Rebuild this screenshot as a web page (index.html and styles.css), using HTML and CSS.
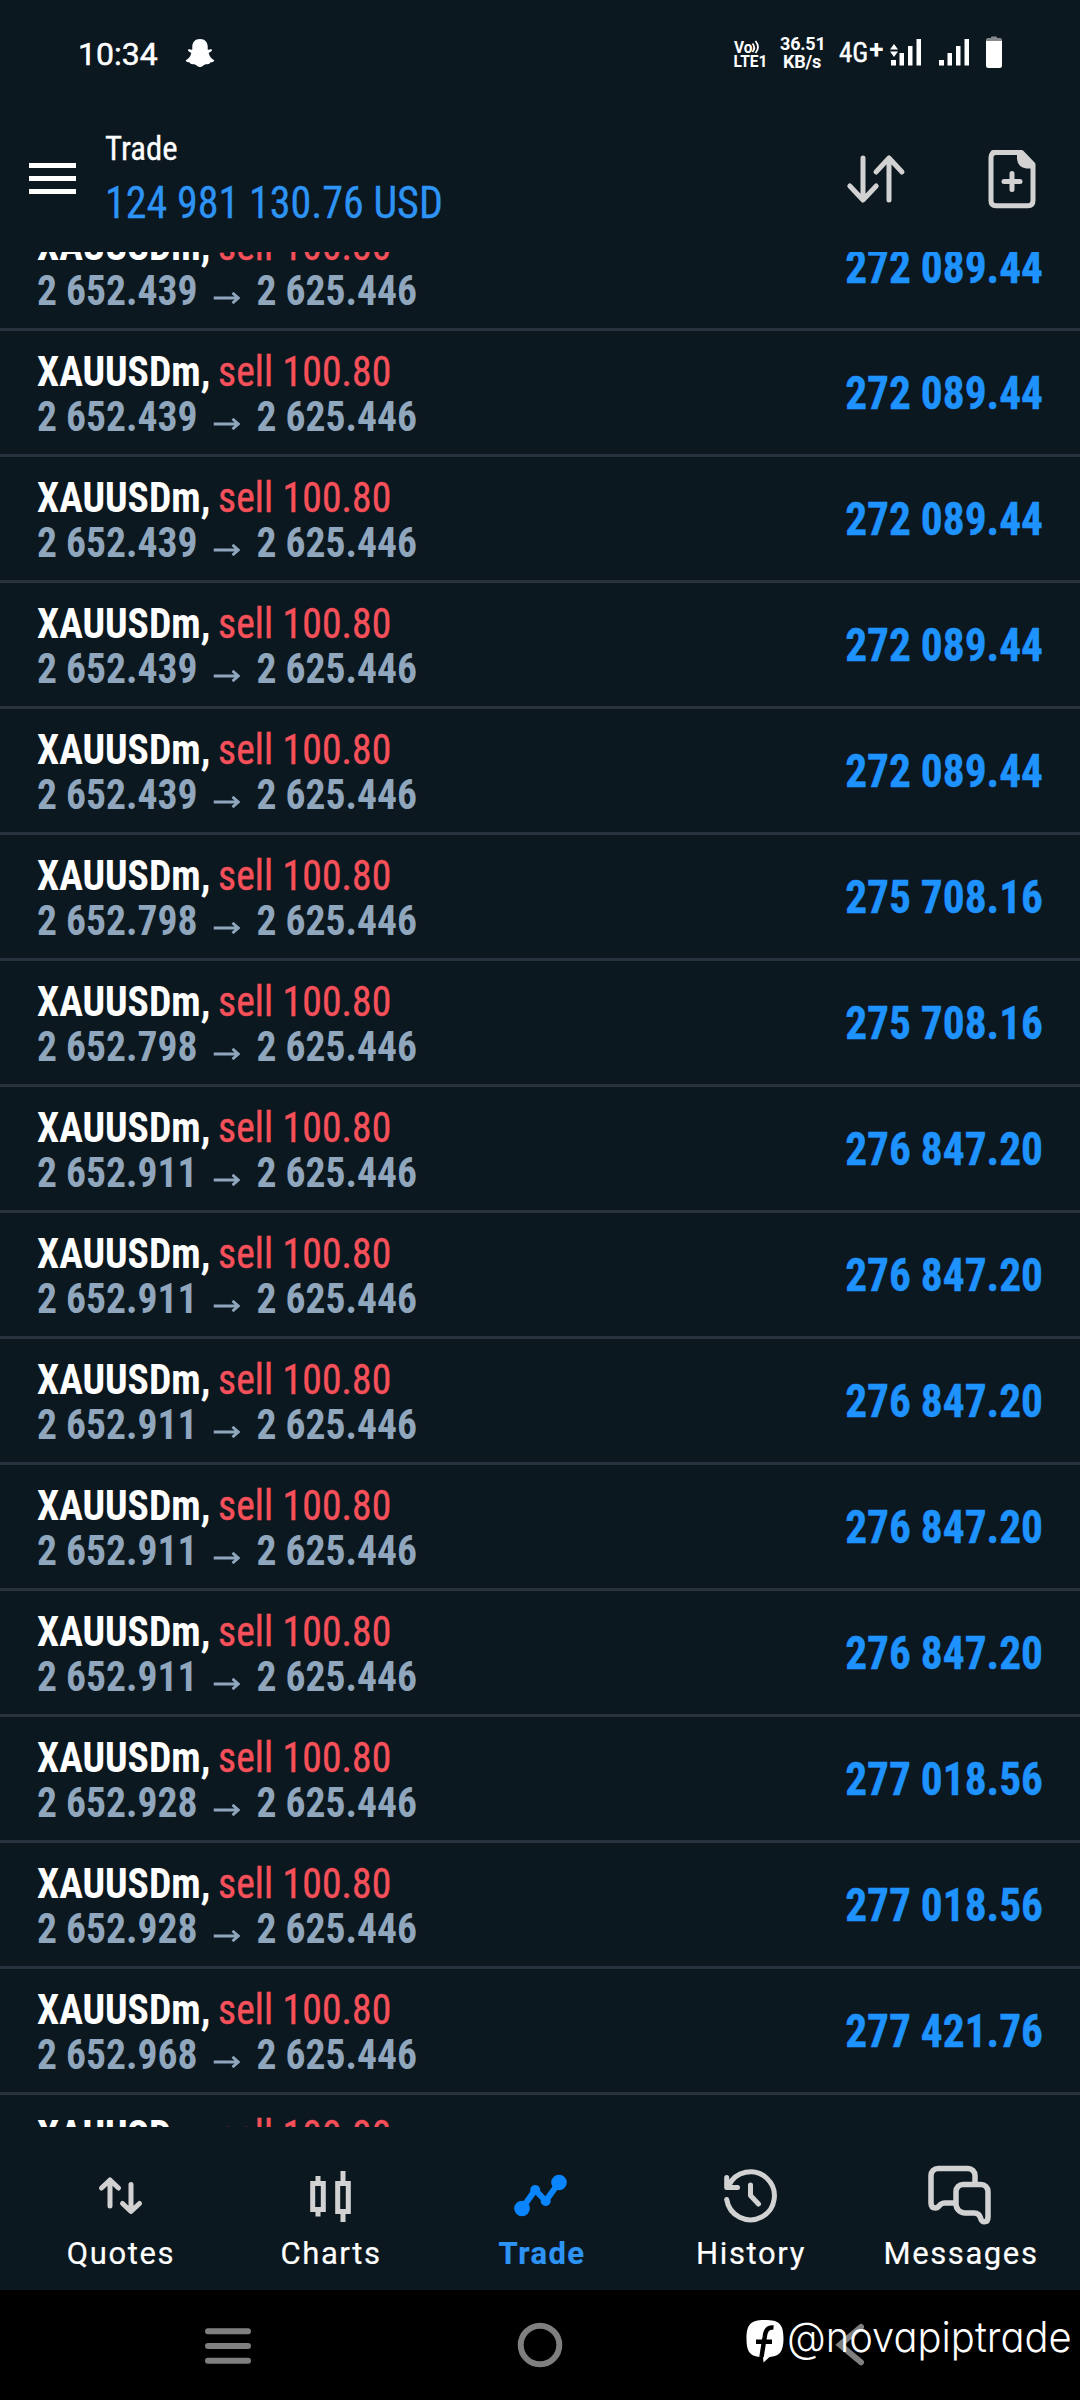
FILE: index.html
```html
<!DOCTYPE html>
<html lang="en">
<head>
<meta charset="utf-8">
<title>Trade</title>
<link rel="stylesheet" href="styles.css">
</head>
<body>
<div class="status">
  <span class="clock">10:34</span>
  <svg class="ghost" width="30" height="30" viewBox="0 0 30 30"><path d="M15 1C10 1 7.3 4.500 7.300 8.500V11.500C6 12 4.500 10.800 3.200 11.600C2.300 13 4.500 14 6.300 15C5.500 18.500 3.500 21 .8 22.300C.8 24 3.500 24.300 5 24.700C5.300 26.500 7.500 26 9.500 26.300C11.500 27 12.500 29 15 29S18.500 27 20.500 26.300C22.500 26 24.700 26.500 25 24.700C26.500 24.300 29.200 24 29.200 22.300C26.500 21 24.500 18.500 23.700 15C25.500 14 27.700 13 26.800 11.600C25.500 10.800 24 12 22.700 11.500V8.500C22.700 4.500 20 1 15 1Z"/></svg>
  <svg class="volte" width="36" height="30" viewBox="733 38 36 30"><text x="734" y="51.500" textLength="18.500" lengthAdjust="spacingAndGlyphs">Vo</text><path d="M752.500 42.500q3.500 4 0 8.500M755.500 40q5 6 0 12" /><text x="733.500" y="65.500" textLength="34" lengthAdjust="spacingAndGlyphs">LTE1</text></svg>
  <span class="speed">36.51<br>KB/s</span>
  <span class="net">4G<b>+</b></span>
  <svg class="signal" width="80" height="28" viewBox="890 38 80 28"><path d="M890 49.500l4-5.500 4 5.500zM890 51.500l4 5.500 4-5.500zM891 60h5v5.500h-5zM899.500 53h4.500v12.500h-4.500zM908 46h4.500v19.500h-4.500zM916.500 39h4.500v26.500h-4.500zM939 60h5v5.500h-5zM947.500 53h4.500v12.500h-4.500zM956 46h4.500v19.500h-4.500zM964.500 39h4.500v26.500h-4.500z"/></svg>
  <svg class="battery" width="16" height="32" viewBox="0 0 16 32"><path class="dim" d="M0 5V4q0-2 2-2H5V1.500q0-1 1-1h4q1 0 1 1V2h3q2 0 2 2v1z"/><path d="M0 5h16v24.500q0 2.500-2.500 2.500h-11q-2.500 0-2.500-2.500z"/></svg>
</div>
<header class="appbar">
  <div class="burger"><i></i><i></i><i></i></div>
  <div class="titles">
    <div class="page">Trade</div>
    <div class="profit">124 981 130.76 USD</div>
  </div>
  <svg class="line sort" width="60" height="60" viewBox="845.500 148.500 60 60"><path d="M862.500 157.500V199M849.300 185.500l13.200 14 13.200-14M888.500 199.500V158M875.500 171.500l13-14 13 14"/></svg>
  <svg class="line" width="48" height="60" viewBox="987.500 148.500 48 60"><path d="M992.500 152H1021l11.500 12V200q0 5.200-5 5.200H995.500q-5 0-5-5V157q0-5 5-5z"/><path class="solid" d="M1016.500 151.500H1021.500L1032.500 163.500V168H1026q-8.500-1-9.500-9.500z"/><path d="M1003.500 181h16M1011.500 173v16"/></svg>
</header>
<svg class="defs"><symbol id="arrow" viewBox="0 0 28 12"><path d="M0 6H26M20 .8L26.300 6L20 11.200"/></symbol></svg>
<main class="list">
  <div class="row"><div class="info"><div class="name"><b>XAUUSDm,</b> <span>sell 100.80</span></div><div class="price"><span>2 652.439</span><svg><use href="#arrow"/></svg><span>2 625.446</span></div></div><div class="sum">272 089.44</div></div>
  <div class="row"><div class="info"><div class="name"><b>XAUUSDm,</b> <span>sell 100.80</span></div><div class="price"><span>2 652.439</span><svg><use href="#arrow"/></svg><span>2 625.446</span></div></div><div class="sum">272 089.44</div></div>
  <div class="row"><div class="info"><div class="name"><b>XAUUSDm,</b> <span>sell 100.80</span></div><div class="price"><span>2 652.439</span><svg><use href="#arrow"/></svg><span>2 625.446</span></div></div><div class="sum">272 089.44</div></div>
  <div class="row"><div class="info"><div class="name"><b>XAUUSDm,</b> <span>sell 100.80</span></div><div class="price"><span>2 652.439</span><svg><use href="#arrow"/></svg><span>2 625.446</span></div></div><div class="sum">272 089.44</div></div>
  <div class="row"><div class="info"><div class="name"><b>XAUUSDm,</b> <span>sell 100.80</span></div><div class="price"><span>2 652.439</span><svg><use href="#arrow"/></svg><span>2 625.446</span></div></div><div class="sum">272 089.44</div></div>
  <div class="row"><div class="info"><div class="name"><b>XAUUSDm,</b> <span>sell 100.80</span></div><div class="price"><span>2 652.798</span><svg><use href="#arrow"/></svg><span>2 625.446</span></div></div><div class="sum">275 708.16</div></div>
  <div class="row"><div class="info"><div class="name"><b>XAUUSDm,</b> <span>sell 100.80</span></div><div class="price"><span>2 652.798</span><svg><use href="#arrow"/></svg><span>2 625.446</span></div></div><div class="sum">275 708.16</div></div>
  <div class="row"><div class="info"><div class="name"><b>XAUUSDm,</b> <span>sell 100.80</span></div><div class="price"><span>2 652.911</span><svg><use href="#arrow"/></svg><span>2 625.446</span></div></div><div class="sum">276 847.20</div></div>
  <div class="row"><div class="info"><div class="name"><b>XAUUSDm,</b> <span>sell 100.80</span></div><div class="price"><span>2 652.911</span><svg><use href="#arrow"/></svg><span>2 625.446</span></div></div><div class="sum">276 847.20</div></div>
  <div class="row"><div class="info"><div class="name"><b>XAUUSDm,</b> <span>sell 100.80</span></div><div class="price"><span>2 652.911</span><svg><use href="#arrow"/></svg><span>2 625.446</span></div></div><div class="sum">276 847.20</div></div>
  <div class="row"><div class="info"><div class="name"><b>XAUUSDm,</b> <span>sell 100.80</span></div><div class="price"><span>2 652.911</span><svg><use href="#arrow"/></svg><span>2 625.446</span></div></div><div class="sum">276 847.20</div></div>
  <div class="row"><div class="info"><div class="name"><b>XAUUSDm,</b> <span>sell 100.80</span></div><div class="price"><span>2 652.911</span><svg><use href="#arrow"/></svg><span>2 625.446</span></div></div><div class="sum">276 847.20</div></div>
  <div class="row"><div class="info"><div class="name"><b>XAUUSDm,</b> <span>sell 100.80</span></div><div class="price"><span>2 652.928</span><svg><use href="#arrow"/></svg><span>2 625.446</span></div></div><div class="sum">277 018.56</div></div>
  <div class="row"><div class="info"><div class="name"><b>XAUUSDm,</b> <span>sell 100.80</span></div><div class="price"><span>2 652.928</span><svg><use href="#arrow"/></svg><span>2 625.446</span></div></div><div class="sum">277 018.56</div></div>
  <div class="row"><div class="info"><div class="name"><b>XAUUSDm,</b> <span>sell 100.80</span></div><div class="price"><span>2 652.968</span><svg><use href="#arrow"/></svg><span>2 625.446</span></div></div><div class="sum">277 421.76</div></div>
  <div class="row"><div class="info"><div class="name"><b>XAUUSDm,</b> <span>sell 100.80</span></div></div></div>
</main>
<nav class="tabs">
  <div class="tab"><svg class="line" viewBox="90 2163 60 64"><path d="M110 2206V2180M101.500 2188l8.500-8 8.500 8M131 2184.500V2211M122.500 2203.500l8.500 8 8.500-8"/></svg><span>Quotes</span></div>
  <div class="tab"><svg class="line square" viewBox="300 2163 60 64"><path d="M312.700 2183.500H323.300V2209.500H312.700zM318 2176V2183M318 2210V2216.500M337.700 2183.500H348.300V2211.500H337.700zM343 2171V2183M343 2212V2222"/></svg><span>Charts</span></div>
  <div class="tab on"><svg viewBox="510 2163 60 64"><path d="M522 2208.500L535.200 2190L545.700 2201L559 2182.500"/><circle cx="522" cy="2208.500" r="7.800"/><circle cx="535.200" cy="2190" r="5"/><circle cx="545.700" cy="2201" r="5"/><circle cx="559" cy="2182.500" r="7.800"/></svg><span>Trade</span></div>
  <div class="tab"><svg class="line" viewBox="720 2163 60 64"><path d="M726.700 2199.500A24 24 0 1 0 728.500 2186M726.700 2177.500V2187.500H737.500M750.500 2185V2195.500L758.500 2204"/></svg><span>History</span></div>
  <div class="tab"><svg class="line thick" viewBox="930 2163 60 64"><path d="M975 2182V2175.500a7 7 0 0 0-7-7H938a7 7 0 0 0-7 7V2203q0 5 4.500 5 2 0 4-2.500 2-2.500 5.500-2.500H955M963 2184.500H981a7 7 0 0 1 7 7V2217q0 4.800-3.500 4.800-3 0-4-4-1.500-4.800-6-4.800H965a9 9 0 0 1-9-9V2191.500a7 7 0 0 1 7-7z"/></svg><span>Messages</span></div>
</nav>
<footer class="sysbar">
  <svg width="1080" height="110" viewBox="0 2290 1080 110"><path d="M208 2331.200H248M208 2346H248M208 2360.700H248"/><circle cx="540" cy="2345" r="19.300"/><path d="M861 2327L840 2344.700L861 2362.300"/></svg>
  <div class="handle">
    <svg width="38" height="44" viewBox="746 2319 38 44"><path class="badge" d="M765 2320C779 2320 783.500 2324 783.500 2338.500C783.500 2352 779 2356.500 769.500 2357L763.500 2362.500L763 2357C750 2357 746.500 2352 746.500 2338.500C746.500 2324 751 2320 765 2320Z"/><path class="cut" d="M773.500 2327.500C767 2327 765.500 2331 764.700 2337L761.500 2357M756 2341.800H772"/></svg>
    <span>@novapiptrade</span>
  </div>
</footer>
</body>
</html>
```
FILE: styles.css
```css
* { box-sizing: border-box; }
body {
  margin: 0;
  width: 1080px;
  height: 2400px;
  overflow: hidden;
  display: flex;
  flex-direction: column;
  background: #0c1820;
  color: #fff;
  font-family: Roboto, sans-serif;
}
svg { display: block; flex: none; }
.defs { width: 0; height: 0; }

.status {
  height: 108px;
  flex: none;
  display: flex;
  align-items: center;
  padding-left: 78px;
  fill: #fff;
}
.clock { font-size: 32px; line-height: 36px; width: 107px; -webkit-text-stroke: .5px #fff; }
.ghost { margin-right: 518px; margin-top: -2px; }
.volte { margin-right: 11px; }
.volte path { fill: none; stroke: #fff; stroke-width: 1.8; }
.volte text { font: 700 16px Roboto, sans-serif; }
.speed { width: 44px; font-size: 18px; line-height: 18.500px; font-weight: 700; text-align: center; letter-spacing: -.2px; margin-right: 15px; margin-top: -2px; }
.net { width: 51px; font: 27px/32px "Roboto Condensed", Roboto, sans-serif; margin-top: -3px; -webkit-text-stroke: .4px #fff; display: flex; }
.net b { font: 700 26px/24px Roboto, sans-serif; margin-left: 1px; -webkit-text-stroke: 0; }
.signal { margin-right: 16px; margin-top: -4px; }
.battery { margin-top: -4px; }
.battery .dim { fill: #85898d; }

.appbar {
  height: 144px;
  flex: none;
  display: flex;
  align-items: center;
  padding: 0 44.500px 3px 29px;
}
.burger { width: 47px; display: flex; flex-direction: column; gap: 8px; margin-right: 29px; }
.burger i { height: 5px; background: #fff; }
.titles { font-family: "Roboto Condensed", Roboto, sans-serif; flex: 1; padding-bottom: 1px; -webkit-text-stroke-width: .3px; }
.page { font-size: 34px; line-height: 50px; transform: scaleX(.965); transform-origin: left; }
.profit { font-size: 44px; line-height: 60px; color: #2d94f5; white-space: nowrap; transform: scaleX(.956); transform-origin: left; }
.line { fill: none; stroke: #d2d2d2; stroke-width: 5; stroke-linecap: round; stroke-linejoin: round; }
.line .solid { fill: #d2d2d2; stroke: none; }
.sort { margin-right: 82px; }

.list { height: 1875px; flex: none; overflow: hidden; }
.row {
  height: 126px;
  border-bottom: 3px solid #28323f;
  display: flex;
  justify-content: space-between;
  padding: 18px 37px 0 37px;
  font-family: "Roboto Condensed", Roboto, sans-serif;
}
.row:first-child { margin-top: -47px; }
.info { font-size: 42px; line-height: 45px; transform: scaleX(.942); transform-origin: left; white-space: nowrap; }
.name span { color: #f6505a; margin-left: -1.500px; letter-spacing: .15px; -webkit-text-stroke: .4px #f6505a; }
.price { display: flex; align-items: center; color: #8fa6bd; font-weight: 700; }
.price span:first-child { width: 187px; }
.price svg { width: 29px; height: 12px; margin: 14px 17px 0 0; fill: none; stroke: #8fa6bd; stroke-width: 2.800; }
.sum { font-size: 46px; line-height: 89px; font-weight: 700; color: #1e93ff; transform: scaleX(.942); transform-origin: right; -webkit-text-stroke: .4px #1e93ff; }

.tabs { height: 163px; flex: none; display: flex; padding: 36px 15px 0; }
.tab { width: 210px; display: flex; flex-direction: column; align-items: center; gap: 9px; font-size: 31px; line-height: 36px; letter-spacing: 1.600px; }
.tab span { padding-left: 2px; -webkit-text-stroke-width: .2px; }
.tab svg { width: 60px; height: 64px; }
.tab .square { stroke-linecap: butt; stroke-linejoin: miter; }
.tab .thick { stroke-width: 5.500; overflow: visible; }
.on { color: #2d94f5; font-weight: 700; letter-spacing: 1.400px; }
.on span { padding-left: 4px; }
.on svg { fill: #0a85ff; }
.on path { fill: none; stroke: #0a85ff; stroke-width: 6; }

.sysbar { height: 110px; flex: none; position: relative; background: #000; fill: none; stroke: #7f7f7f; stroke-width: 6; stroke-linecap: round; }
.handle { position: absolute; left: 746px; top: 29px; height: 44px; display: flex; gap: 3px; }
.handle span { font: 300 42px/35px Inter, sans-serif; font-feature-settings: "cv11"; transform: scaleX(.95); transform-origin: left; }
.badge { fill: #fff; stroke: none; }
.cut { stroke: #000; stroke-width: 4.500; stroke-linecap: butt; }
```
